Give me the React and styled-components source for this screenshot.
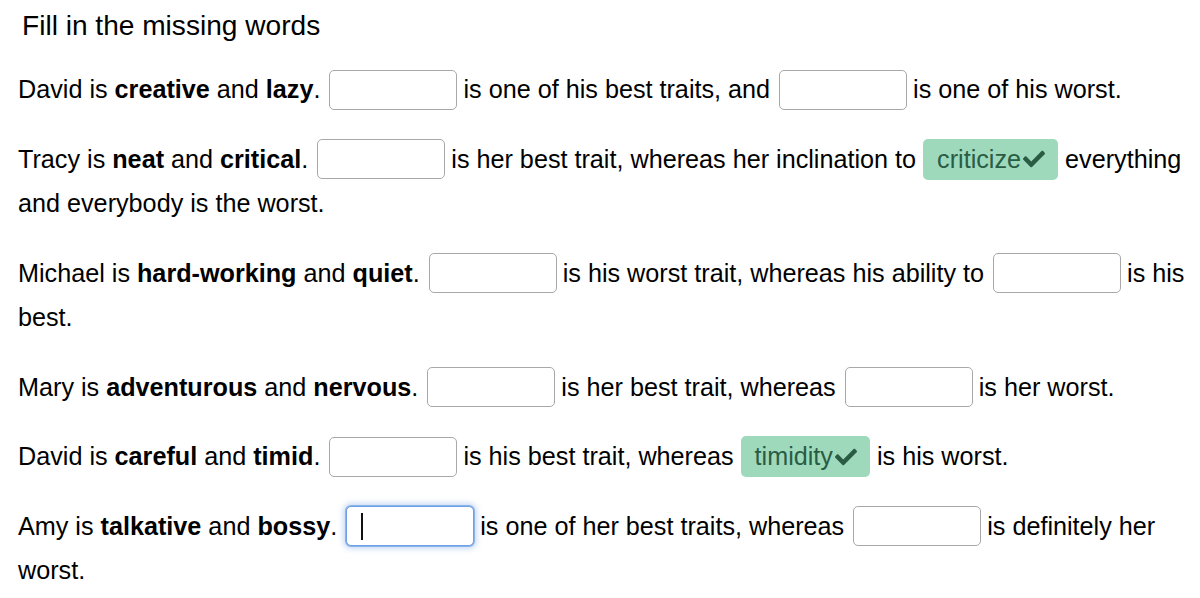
import styled, { createGlobalStyle } from "styled-components";
import { FaCheck } from "react-icons/fa";

const GlobalStyle = createGlobalStyle`
  html, body {
    margin: 0;
    padding: 0;
    background: #fff;
  }
  body {
    font-family: "Liberation Sans", Arial, sans-serif;
    color: #000;
  }
`;

const Page = styled.div`
  padding: 10px 8px 0 18px;
`;

const Title = styled.h1`
  margin: 0 0 26px 4px;
  font-size: 28.1px;
  font-weight: normal;
  line-height: 31px;
`;

const Sentence = styled.p`
  margin: 0 0 25px;
  font-size: 25.2px;
  line-height: 44.5px;
`;

// baseline-aligned: text inside a 40px box sits so the box centres on the line
const Gap = styled.input.attrs({ type: "text" })`
  box-sizing: border-box;
  width: 128px;
  height: 40px;
  margin: 0 -1px 0 2px;
  padding: 0 14px;
  border: 1px solid ${(p) => (p.$focused ? "#6f9fe4" : "#a8a8a8")};
  border-radius: 5px;
  background: #fff;
  vertical-align: baseline;
  font: inherit;
  line-height: normal;
  outline: none;
  caret-color: transparent;
  box-shadow: ${(p) =>
    p.$focused ? "0 0 0 1px #8cb3ec, 0 0 6px 2px rgba(100, 150, 225, 0.45)" : "none"};
`;

const GapWrap = styled.span`
  position: relative;
  display: inline-flex;
  align-items: baseline;
  margin: 0 -1px 0 2px;

  & > input {
    margin: 0;
  }
`;

const Caret = styled.span`
  position: absolute;
  left: 15px;
  top: 7px;
  width: 1.5px;
  height: 27px;
  background: #111;
`;

const Answer = styled.span`
  display: inline-flex;
  align-items: center;
  gap: 2px;
  box-sizing: border-box;
  height: 41px;
  padding: 0 13px 0 14px;
  border-radius: 5px;
  background: #9ed9bc;
  color: #2a5c44;
  vertical-align: baseline;
  line-height: 1;

  svg {
    width: 22px;
    height: 22px;
  }
`;

const Gapped = ({ focused }) =>
  focused ? (
    <GapWrap>
      <Gap $focused readOnly />
      <Caret />
    </GapWrap>
  ) : (
    <Gap readOnly />
  );

const Filled = ({ word }) => (
  <Answer>
    {word}
    <FaCheck />
  </Answer>
);

export default function App() {
  return (
    <>
      <GlobalStyle />
      <Page>
        <Title>Fill in the missing words</Title>

        <Sentence>
          David is <b>creative</b> and <b>lazy</b>. <Gapped /> is one of his best traits,
          and <Gapped /> is one of his worst.
        </Sentence>

        <Sentence>
          Tracy is <b>neat</b> and <b>critical</b>. <Gapped /> is her best trait, whereas her
          inclination to <Filled word="criticize" /> everything and everybody is the worst.
        </Sentence>

        <Sentence>
          Michael is <b>hard-working</b> and <b>quiet</b>. <Gapped /> is his worst trait,
          whereas his ability to <Gapped /> is his best.
        </Sentence>

        <Sentence>
          Mary is <b>adventurous</b> and <b>nervous</b>. <Gapped /> is her best trait,
          whereas <Gapped /> is her worst.
        </Sentence>

        <Sentence>
          David is <b>careful</b> and <b>timid</b>. <Gapped /> is his best trait, whereas{" "}
          <Filled word="timidity" /> is his worst.
        </Sentence>

        <Sentence>
          Amy is <b>talkative</b> and <b>bossy</b>. <Gapped focused /> is one of her best
          traits, whereas <Gapped /> is definitely her worst.
        </Sentence>
      </Page>
    </>
  );
}
